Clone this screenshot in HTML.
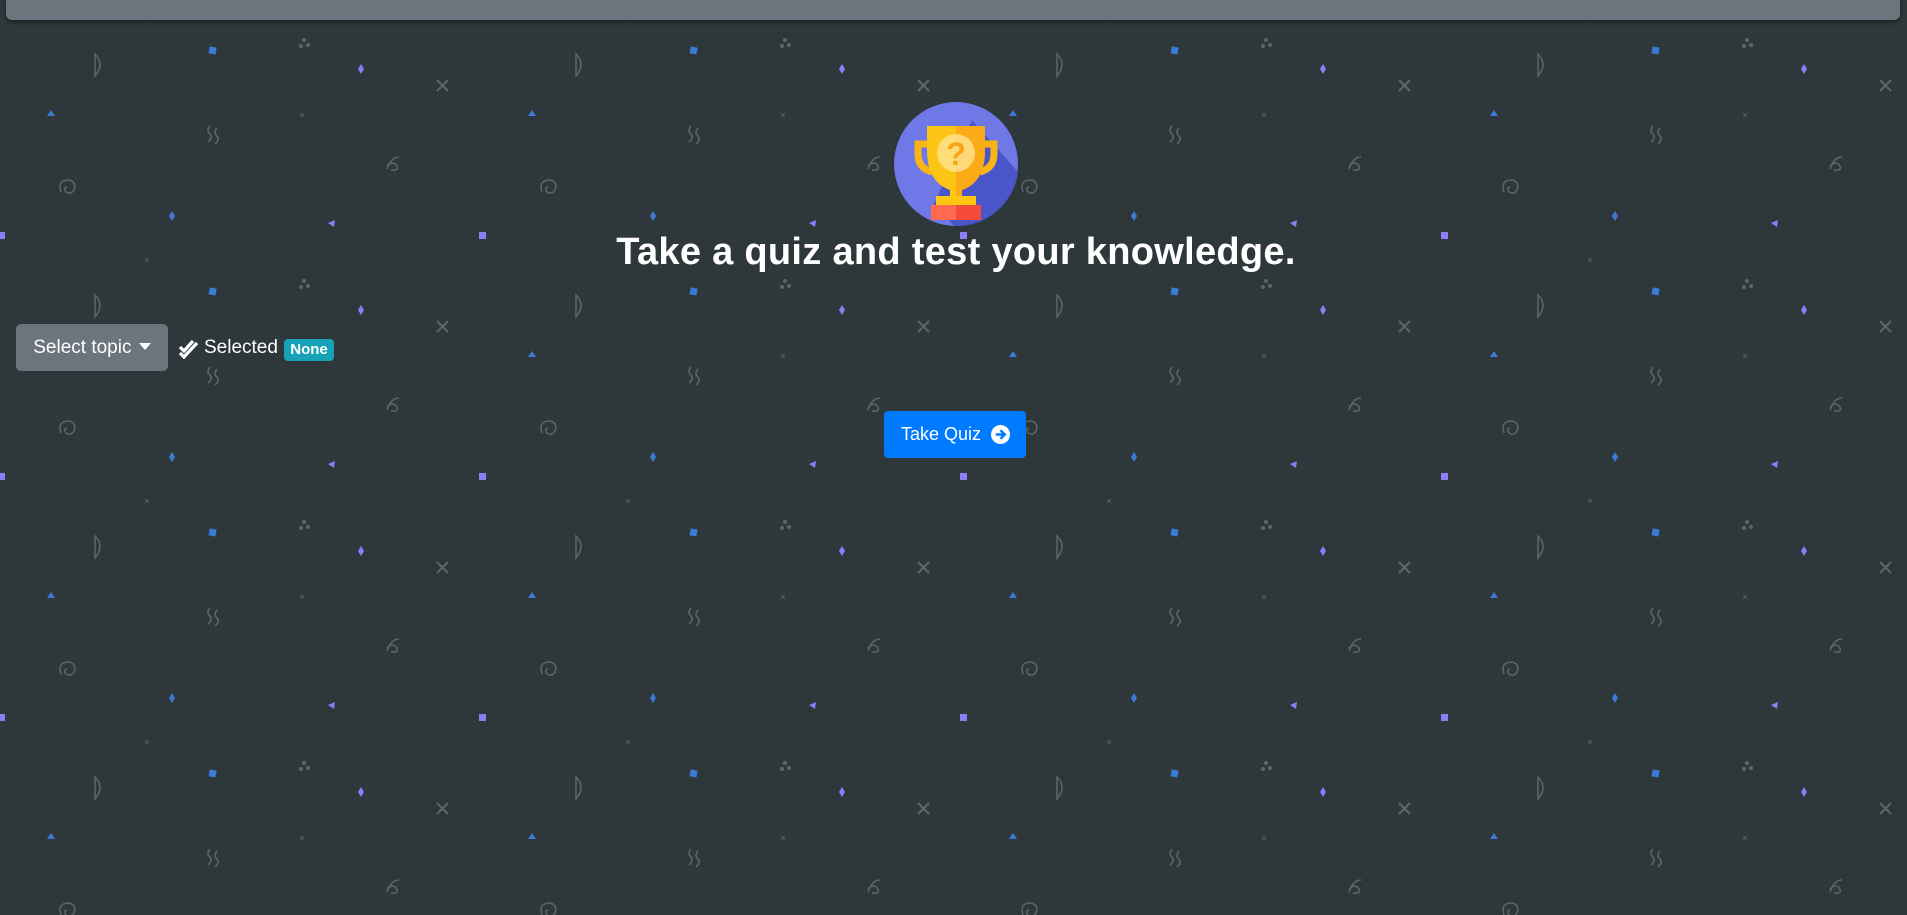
<!DOCTYPE html>
<html><head><meta charset="utf-8">
<style>
html,body{margin:0;padding:0;width:1907px;height:915px;overflow:hidden;background:#2e383b;font-family:"Liberation Sans",sans-serif;}
.bar{position:absolute;left:6px;top:-4px;width:1894px;height:24px;background:#6c757d;border-radius:0 0 6px 6px;box-shadow:0 2px 4px rgba(0,0,0,.5);}
svg.bg{position:absolute;left:0;top:0}
h1{position:absolute;left:0;width:1912px;text-align:center;top:231px;margin:0;color:#fff;font-size:38px;font-weight:bold;letter-spacing:0.3px}
.sel{position:absolute;left:16px;top:324px;width:152px;height:47px;background:#6c757d;border-radius:5px;color:#fff;font-size:19px;line-height:47px;text-align:center}
.lbl{position:absolute;left:204px;top:337px;color:#fff;font-size:19px}
.badge{position:absolute;left:284px;top:339px;width:50px;height:22px;background:#17a2b8;border-radius:4px;color:#fff;font-weight:bold;font-size:15px;line-height:22px;text-align:center}
.tq{position:absolute;left:884px;top:411px;width:142px;height:47px;background:#007bff;border-radius:4px;color:#fff;font-size:18px;line-height:47px}
</style></head><body>
<svg class="bg" width="1907" height="915">
<defs>
<pattern id="p" x="0" y="0" width="481" height="241" patternUnits="userSpaceOnUse">
<path d="M95 54 q10 10 0 22 z" fill="none" stroke="#5d6568" stroke-width="1.5"/>
<rect x="209" y="47" width="7" height="7" fill="#3a7bd5" transform="rotate(10 213 51)"/>
<circle cx="304" cy="40" r="2" fill="#5d6568"/><circle cx="301" cy="46" r="2" fill="#5d6568"/><circle cx="308" cy="45" r="2" fill="#5d6568"/>
<path d="M361 64 l3 5 -3 5 -3 -5z" fill="#8c7cf7"/>
<path d="M437 80 l11 11 M448 80 l-11 11" stroke="#5d6568" stroke-width="2"/>
<path d="M51 110 l4 6 -8 0z" fill="#3a7bd5"/>
<path d="M300 113 l4 4 M304 113 l-4 4" stroke="#5d6568" stroke-width="0.8"/>
<path d="M210 126 q-4 5 0 8 q3 4 -2 8 M217 128 q-4 5 0 8 q3 4 -2 8" fill="none" stroke="#5d6568" stroke-width="1.5"/>
<path d="M399 157 q-8 0 -12 12 M387 166 q6 -6 10 0 q2 5 -6 4" fill="none" stroke="#5d6568" stroke-width="1.5"/>
<path d="M61 192 q-4 -12 8 -12 q8 2 5 10 q-3 5 -8 2 q-3 -4 1 -5" fill="none" stroke="#5d6568" stroke-width="1.5"/>
<path d="M172 211 l3 5 -3 5 -3 -5z" fill="#3a7bd5"/>
<path d="M328 223 l7 -3 -1 7z" fill="#8c7cf7"/>
<rect x="479" y="232" width="7" height="7" fill="#8c7cf7"/><rect x="-2" y="232" width="7" height="7" fill="#8c7cf7"/>
<path d="M145 17 l4 4 M149 17 l-4 4" stroke="#5d6568" stroke-width="0.8"/>
</pattern></defs>
<rect width="1907" height="915" fill="url(#p)"/>
</svg>
<div class="bar"></div>
<svg style="position:absolute;left:894px;top:102px" width="124" height="124" viewBox="0 0 124 124">
<circle cx="62" cy="62" r="62" fill="#6e78e6"/>
<path d="M78 18 L124 70 A62 62 0 0 1 60 124 L40 102 Z" fill="#4a55c9"/>
<path d="M36 42 h-12 v10 q0 14 14 18 M88 42 h12 v10 q0 14 -14 18" fill="none" stroke="#fbb416" stroke-width="7"/>
<path d="M33 24 h58 v24 q0 32 -23 40 v6 h-12 v-6 q-23 -8 -23 -40z" fill="#fdc514"/>
<path d="M62 24 h29 v24 q0 32 -23 40 v6 h-6z" fill="#fbab16"/>
<rect x="42" y="94" width="40" height="9" fill="#fdc514"/>
<rect x="37" y="103" width="50" height="15" fill="#fe6a50"/><rect x="62" y="103" width="25" height="15" fill="#f54b3a"/>
<circle cx="62" cy="51" r="19" fill="#ffe08a" opacity=".85"/>
<text x="62" y="63" text-anchor="middle" font-family="Liberation Sans" font-weight="bold" font-size="32" fill="#fba316">?</text>
</svg>
<h1>Take a quiz and test your knowledge.</h1>
<div class="sel">Select topic <span style="display:inline-block;border-left:6px solid transparent;border-right:6px solid transparent;border-top:7px solid #fff;vertical-align:3px;margin-left:2px"></span></div>
<svg style="position:absolute;left:178px;top:338px" width="22" height="22" viewBox="0 0 22 22"><path d="M2 9 l4 4 l9 -10 M2 15 l4 4 l13 -14" fill="none" stroke="#fff" stroke-width="3.2"/></svg>
<div class="lbl">Selected</div>
<div class="badge">None</div>
<div class="tq"><span style="margin-left:17px">Take Quiz</span><svg style="position:absolute;left:107px;top:14px" width="19" height="19" viewBox="0 0 20 20"><circle cx="10" cy="10" r="10" fill="#fff"/><path d="M5 10 h9 M10 5.5 l4.5 4.5 -4.5 4.5" stroke="#007bff" stroke-width="2.6" fill="none"/></svg></div>
</body></html>
